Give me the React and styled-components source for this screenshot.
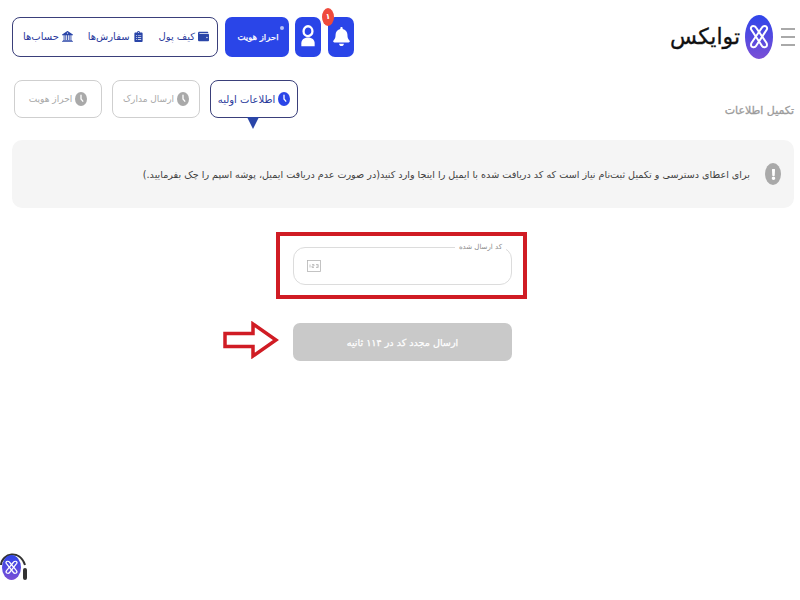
import React from 'react';
import styled, { createGlobalStyle } from 'styled-components';
import { FaBell, FaWallet, FaClipboardList, FaExclamation } from 'react-icons/fa';
import { BsBank2 } from 'react-icons/bs';

const FONT = '"DejaVu Sans", "Noto Sans", "Liberation Sans", sans-serif';

const Global = createGlobalStyle`
  html, body { margin: 0; padding: 0; background: #fff; }
  body { font-family: ${FONT}; width: 800px; height: 600px; overflow: hidden; }
  * { box-sizing: border-box; }
`;

const Page = styled.div`
  direction: rtl;
  width: 800px;
  height: 600px;
  padding: 16px 6px 0 12px;
`;

const Header = styled.header`
  display: flex;
  justify-content: space-between;
  align-items: center;
  height: 41px;
  margin-right: -1px;
`;

const Brand = styled.div`
  display: flex;
  align-items: center;
  gap: 8px;
`;

const Burger = styled.div`
  width: 14px;
  height: 18px;
  display: flex;
  flex-direction: column;
  justify-content: space-between;
  & > i { display: block; height: 2px; background: #a9a9a9; }
`;

const BrandName = styled.span`
  font-size: 22px;
  line-height: 41px;
  font-weight: 400;
  color: #111;
  -webkit-text-stroke: 0.3px #111;
  margin-right: -3px;
  width: 70px;
  white-space: nowrap;
`;

const Tools = styled.div`
  display: flex;
  align-items: stretch;
  gap: 7px;
`;

const IconButton = styled.div`
  position: relative;
  width: 26px;
  height: 40px;
  border-radius: 7px;
  background: #2a45e8;
  color: #fff;
  display: flex;
  align-items: center;
  justify-content: center;
  font-size: 19px;
`;

const Badge = styled.span`
  position: absolute;
  top: -9px;
  left: -6px;
  width: 12px;
  height: 18px;
  border-radius: 50%;
  background: #ef4a3c;
  color: #fff;
  font-size: 8px;
  font-weight: 700;
  display: flex;
  align-items: center;
  justify-content: center;
`;

const VerifyButton = styled.div`
  position: relative;
  width: 64px;
  height: 40px;
  margin-right: -1px;
  border-radius: 7px;
  background: #2a45e8;
  color: #fff;
  font-size: 8.5px;
  -webkit-text-stroke: 0.25px #fff;
  display: flex;
  align-items: center;
  justify-content: center;
  padding-left: 2px;
  white-space: nowrap;
  &::after {
    content: '';
    position: absolute;
    top: 9px;
    right: 5px;
    width: 4px;
    height: 4px;
    border-radius: 50%;
    background: #b6c0f5;
  }
`;

const NavBox = styled.nav`
  width: 206px;
  height: 40px;
  border: 1px solid #3a3f7a;
  border-radius: 8px;
  display: flex;
  align-items: center;
  justify-content: space-between;
  padding: 0 8px 0 10px;
  background: #fff;
`;

const NavItem = styled.div`
  display: flex;
  align-items: center;
  gap: 3px;
  color: #2b3a9c;
  font-size: 10px;
  white-space: nowrap;
  & > svg { flex: none; font-size: 11px; color: #2a45a8; }
`;

const TitleRow = styled.div`
  display: flex;
  justify-content: space-between;
  align-items: flex-end;
  margin-top: 23px;
`;

const Title = styled.h1`
  margin: 0;
  font-size: 11px;
  line-height: 15px;
  font-weight: 400;
  -webkit-text-stroke: 0.3px #9b9b9b;
  color: #9b9b9b;
  white-space: nowrap;
`;

const Steps = styled.div`
  display: flex;
  gap: 10px;
  margin-left: 2px;
`;

const Step = styled.div`
  position: relative;
  width: 88px;
  height: 38px;
  border-radius: 8px;
  border: 1px solid ${p => (p.$active ? '#3a3f7a' : '#cfcfcf')};
  color: ${p => (p.$active ? '#2b3a9c' : '#a8a8a8')};
  font-size: ${p => (p.$active ? '10px' : '9px')};
  display: flex;
  align-items: center;
  justify-content: center;
  gap: 3px;
  white-space: nowrap;
  ${p =>
    p.$active &&
    `&::after {
      content: '';
      position: absolute;
      top: 100%;
      left: 36px;
      border-left: 6px solid transparent;
      border-right: 6px solid transparent;
      border-top: 12px solid #2a45a8;
    }`}
`;

const Alert = styled.div`
  margin-top: 22px;
  height: 68px;
  border-radius: 10px;
  background: #f5f5f5;
  display: flex;
  align-items: center;
  padding: 0 13px 0 8px;
  gap: 15px;
  overflow: hidden;
`;

const AlertIcon = styled.span`
  flex: none;
  width: 16px;
  height: 22px;
  border-radius: 50%;
  background: #a9a9a9;
  color: #fff;
  display: flex;
  align-items: center;
  justify-content: center;
  font-size: 11px;
`;

const AlertText = styled.p`
  margin: 0;
  font-size: 9.6px;
  color: #3d3d3d;
  white-space: nowrap;
`;

const Center = styled.div`
  display: flex;
  flex-direction: column;
  align-items: center;
  padding-right: 3px;
`;

const Highlight = styled.div`
  margin-top: 24px;
  width: 251px;
  height: 67px;
  border: 4px solid #d01c24;
  padding: 11px 11px 0 13px;
`;

const Field = styled.div`
  position: relative;
  width: 219px;
  height: 38px;
  border: 1px solid #dcdcdc;
  border-radius: 12px;
  display: flex;
  align-items: center;
  justify-content: flex-end;
  padding-left: 13px;
`;

const FieldLabel = styled.span`
  position: absolute;
  top: -6px;
  right: 5px;
  padding: 0 4px;
  background: #fff;
  color: #8a8a8a;
  font-size: 7px;
  line-height: 10px;
  white-space: nowrap;
`;

const ActionRow = styled.div`
  position: relative;
  margin: 24px 0 0 2px;
`;

const Resend = styled.div`
  width: 219px;
  height: 38px;
  border-radius: 7px;
  background: #c9c9c9;
  color: #fff;
  font-size: 9.600px;
  -webkit-text-stroke: 0.25px #fff;
  display: flex;
  align-items: center;
  justify-content: center;
  white-space: nowrap;
`;

const ArrowMark = styled.svg`
  position: absolute;
  left: -70px;
  top: -2px;
`;

const Support = styled.div`
  position: fixed;
  left: 0;
  bottom: 10px;
  width: 28px;
  height: 40px;
`;

const SupportBand = styled.svg`
  position: absolute;
  top: 0;
  left: 0;
`;

const SupportBadge = styled.div`
  position: absolute;
  top: 5px;
  left: 2px;
`;

const MarkSvg = styled.svg`
  display: block;
  flex: none;
`;

const Clock = ({ color }) => (
  <svg width="12" height="14" viewBox="0 0 12 14">
    <ellipse cx="6" cy="7" rx="6" ry="7" fill={color} />
    <path d="M6 3.200V7l1.800 2.200" fill="none" stroke="#fff" strokeWidth="1.300" strokeLinecap="round" />
  </svg>
);

const Mark = ({ id, w, h }) => (
  <MarkSvg width={w} height={h} viewBox="0 0 28 44" preserveAspectRatio="none">
    <defs>
      <linearGradient id={id} x1="0" y1="0" x2="0" y2="1">
        <stop offset="0" stopColor="#2f45ea" />
        <stop offset="1" stopColor="#7a4fd6" />
      </linearGradient>
    </defs>
    <ellipse cx="14" cy="22" rx="14" ry="22" fill={`url(#${id})`} />
    <g fill="none" stroke="#fff" strokeWidth="2" strokeLinecap="round">
      <path d="M8 11c-1.600 0-2.600 2-1.800 3.600L17 31c1 1.800 4.800 1.800 5-1 0-1-.2-1.500-.6-2.200L11 12.500C10.400 11.400 9.200 11 8 11z" />
      <path d="M20 11c1.600 0 2.600 2 1.800 3.600L11 31c-1 1.800-4.800 1.800-5-1 0-1 .2-1.500.6-2.200L17 12.500C17.600 11.400 18.800 11 20 11z" />
    </g>
  </MarkSvg>
);

const UserGlyph = () => (
  <svg width="16" height="25" viewBox="0 0 18 26" fill="none">
    <ellipse cx="9" cy="7" rx="5" ry="5.500" stroke="#fff" strokeWidth="2.600" />
    <path d="M1.500 24v-3.500c0-4 3-6.500 7.500-6.500s7.500 2.500 7.500 6.500V24z" fill="#fff" />
  </svg>
);

const CodeGlyph = () => (
  <svg width="14" height="14" viewBox="0 0 14 14" fill="none" stroke="#b5b5b5" strokeWidth="0.800">
    <rect x="0.500" y="1.500" width="13" height="11" />
    <path d="M3 5.500v3M5 5.500h2v1.500h-2v1.500h2M9 5.500h2.200v3h-2.200M9.500 7h1.700" />
  </svg>
);

export default function App() {
  return (
    <>
      <Global />
      <Page>
        <Header>
          <Brand>
            <Burger><i /><i /><i /></Burger>
            <Mark id="brandGrad" w={28} h={44} />
            <BrandName>توایکس</BrandName>
          </Brand>
          <Tools>
            <IconButton>
              <Badge>۱</Badge>
              <FaBell />
            </IconButton>
            <IconButton><UserGlyph /></IconButton>
            <VerifyButton>احراز هویت</VerifyButton>
            <NavBox>
              <NavItem><FaWallet />کیف پول</NavItem>
              <NavItem><FaClipboardList />سفارش‌ها</NavItem>
              <NavItem><BsBank2 />حساب‌ها</NavItem>
            </NavBox>
          </Tools>
        </Header>
        <TitleRow>
          <Title>تکمیل اطلاعات</Title>
          <Steps>
            <Step $active><Clock color="#2a45e8" />اطلاعات اولیه</Step>
            <Step><Clock color="#a9a9a9" />ارسال مدارک</Step>
            <Step><Clock color="#a9a9a9" />احراز هویت</Step>
          </Steps>
        </TitleRow>
        <Alert>
          <AlertIcon><FaExclamation /></AlertIcon>
          <AlertText>برای اعطای دسترسی و تکمیل ثبت‌نام نیاز است که کد دریافت شده با ایمیل را اینجا وارد کنید(در صورت عدم دریافت ایمیل، پوشه اسپم را چک بفرمایید.)</AlertText>
        </Alert>
        <Center>
          <Highlight>
            <Field>
              <FieldLabel>کد ارسال شده</FieldLabel>
              <CodeGlyph />
            </Field>
          </Highlight>
          <ActionRow>
            <Resend>ارسال مجدد کد در ۱۱۴ ثانیه</Resend>
            <ArrowMark width="56" height="38" viewBox="0 0 56 38" fill="none">
              <path d="M2 12.500H30V3L53 19 30 35V25.500H2z" stroke="#d01c24" strokeWidth="3.500" fill="#fff" />
            </ArrowMark>
          </ActionRow>
        </Center>
        <Support>
          <SupportBand width="28" height="40" viewBox="0 0 28 40" fill="none">
            <path d="M1 15C2 3 20 -1 25 15" stroke="#333" strokeWidth="2" />
            <rect x="23" y="18" width="4" height="12" rx="2" fill="#333" />
          </SupportBand>
          <SupportBadge><Mark id="supportGrad" w={19} h={25} /></SupportBadge>
        </Support>
      </Page>
    </>
  );
}
